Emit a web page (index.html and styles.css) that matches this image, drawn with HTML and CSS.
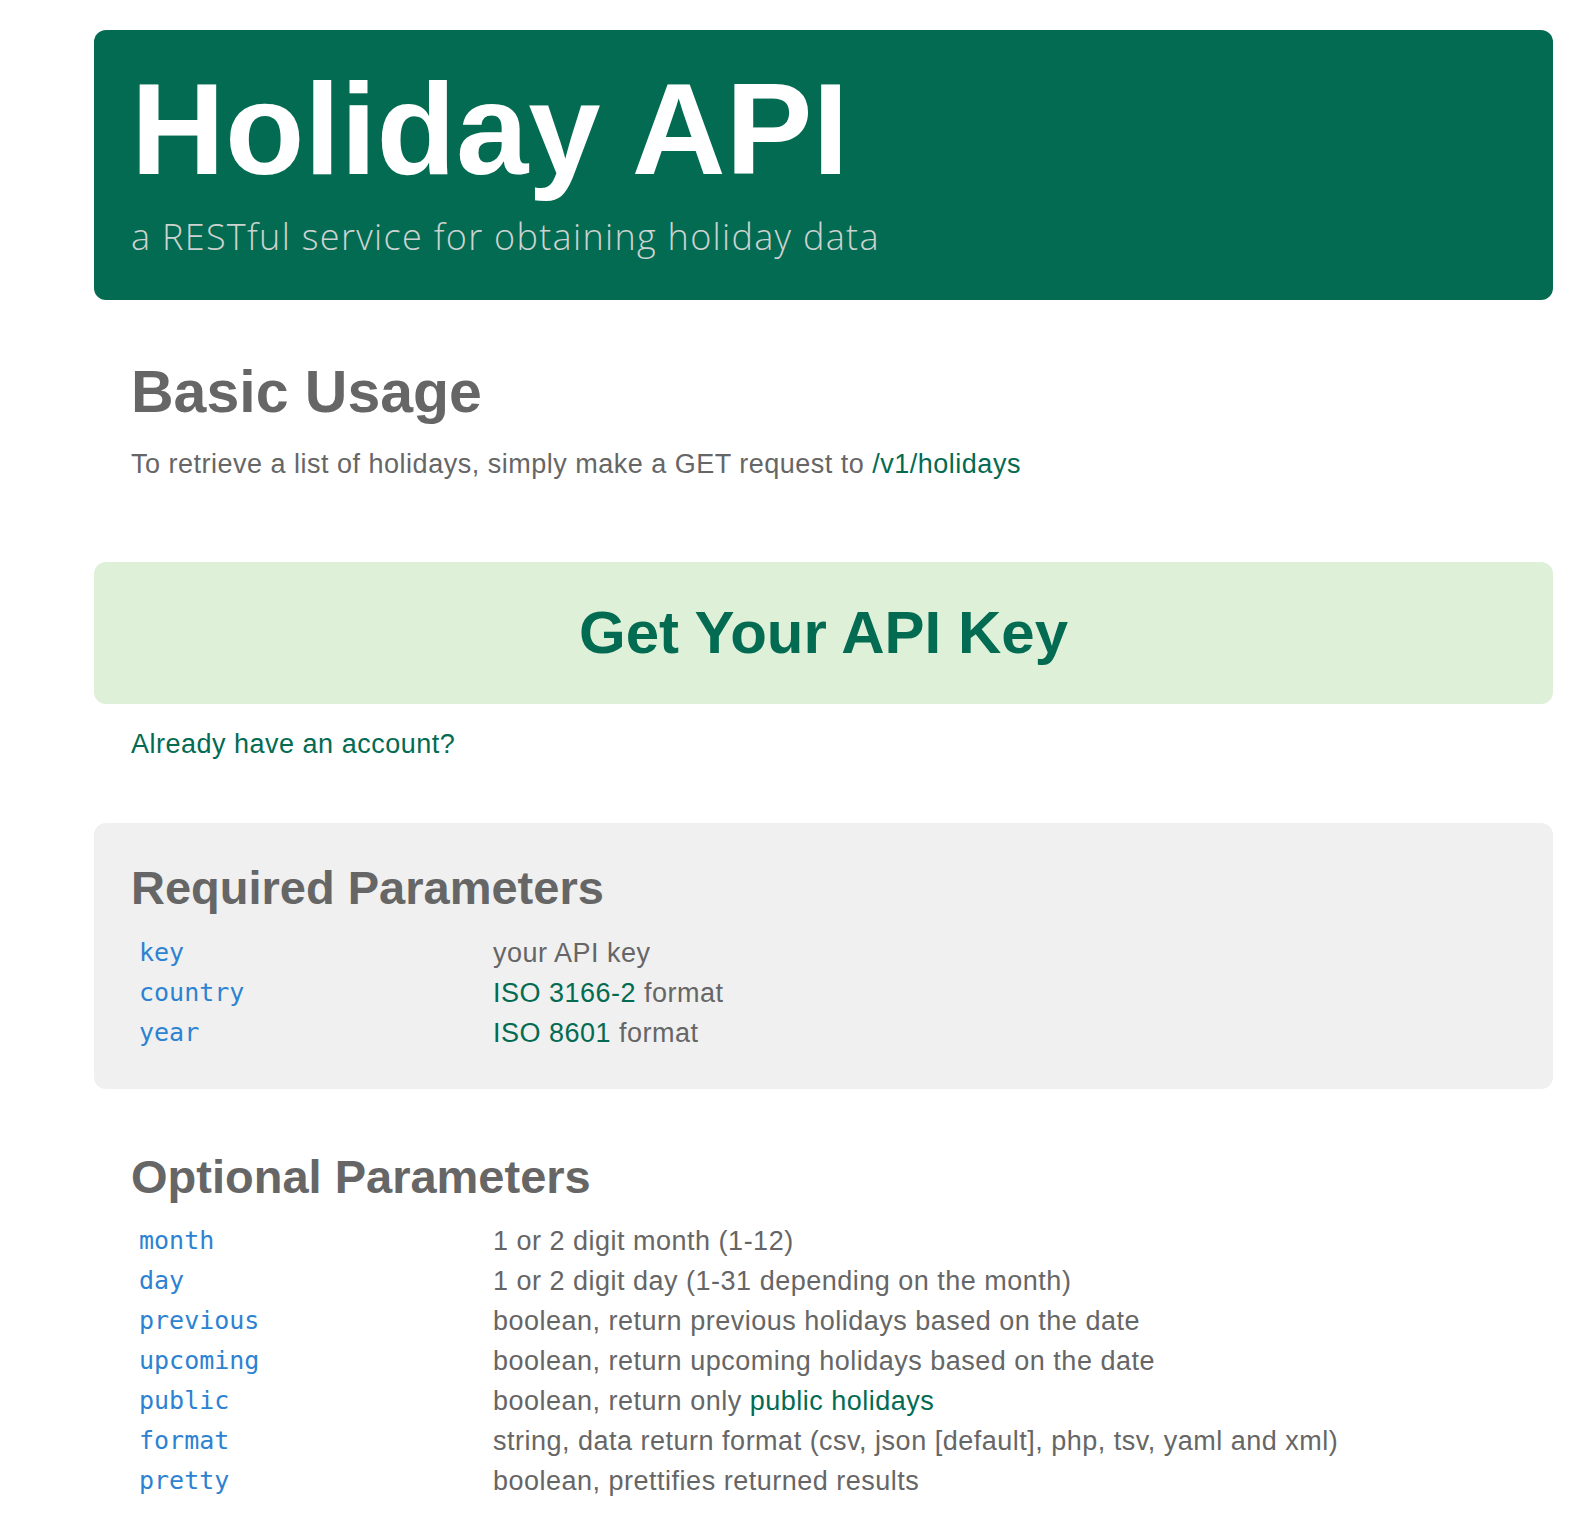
FILE: index.html
```html
<!DOCTYPE html>
<html lang="en">
<head>
    <meta charset="UTF-8">
    <meta name="viewport" content="width=device-width, initial-scale=1.0">
    <title>Holiday API</title>
    <link rel="stylesheet" href="styles.css">
</head>
<body>

<div class="container">

    <!-- Header -->
    <header class="hero">
        <h1>Holiday API</h1>
        <p class="tagline">a RESTful service for obtaining holiday data</p>
    </header>

    <!-- Basic Usage -->
    <section class="usage">
        <h2>Basic Usage</h2>
        <p>To retrieve a list of holidays, simply make a GET request to <a href="#">/v1/holidays</a></p>
    </section>

    <!-- Sign up -->
    <a class="cta" href="#">Get Your API Key</a>
    <p class="login"><a href="#">Already have an account?</a></p>

    <!-- Required Parameters -->
    <section class="params params-required">
        <h3>Required Parameters</h3>
        <div class="param-list">
            <code>key</code><span>your API key</span>
            <code>country</code><span><a href="#">ISO 3166-2</a> format</span>
            <code>year</code><span><a href="#">ISO 8601</a> format</span>
        </div>
    </section>

    <!-- Optional Parameters -->
    <section class="params params-optional">
        <h3>Optional Parameters</h3>
        <div class="param-list">
            <code>month</code><span>1 or 2 digit month (1-12)</span>
            <code>day</code><span>1 or 2 digit day (1-31 depending on the month)</span>
            <code>previous</code><span>boolean, return previous holidays based on the date</span>
            <code>upcoming</code><span>boolean, return upcoming holidays based on the date</span>
            <code>public</code><span>boolean, return only <a href="#">public holidays</a></span>
            <code>format</code><span>string, data return format (csv, json [default], php, tsv, yaml and xml)</span>
            <code>pretty</code><span>boolean, prettifies returned results</span>
        </div>
    </section>

</div>

</body>
</html>
```

FILE: styles.css
```css
body {
    margin: 0;
    font-family: "Liberation Sans", Arial, sans-serif;
    font-size: 27px;
    letter-spacing: 0.5px;
    line-height: 40px;
    color: #666;
    background: #fff;
}

a {
    color: #036b52;
    text-decoration: none;
}

p {
    margin: 0;
}

.container {
    margin: 30px 39px 0 94px;
}

/* header */
.hero {
    background-color: #036b52;
    border-radius: 12px;
    padding: 28px 37px 42px;
}

.hero h1 {
    margin: 0;
    font-size: 130px;
    line-height: 143px;
    font-weight: bold;
    letter-spacing: 0;
    color: #fff;
}

.hero .tagline {
    margin-top: 15px;
    font-family: "Open Sans", "Liberation Sans", sans-serif;
    font-weight: 300;
    font-size: 36px;
    letter-spacing: 1.3px;
    line-height: 42px;
    color: #cdd3d0;
}

/* basic usage */
.usage {
    padding: 60px 37px 0;
}

.usage h2 {
    margin: 0 0 20px;
    font-size: 59px;
    line-height: 64px;
    letter-spacing: 0;
    color: #666;
}

/* api key button */
.cta {
    display: block;
    margin-top: 78px;
    padding: 39px 0;
    background-color: #dff0d8;
    border-radius: 12px;
    text-align: center;
    font-size: 60px;
    line-height: 64px;
    letter-spacing: 0;
    font-weight: bold;
}

.login {
    padding: 20px 37px 0;
}

/* parameters */
.params {
    padding: 0 37px;
}

.params h3 {
    margin: 0;
    font-size: 47px;
    line-height: 52px;
    letter-spacing: 0;
    color: #666;
}

.params-required {
    margin-top: 59px;
    padding-top: 39px;
    padding-bottom: 36px;
    background-color: #f0f0f0;
    border-radius: 12px;
}

.params-optional {
    margin-top: 62px;
}

.param-list {
    display: grid;
    grid-template-columns: 362px 1fr;
    grid-auto-rows: 40px;
    margin-top: 19px;
}

.params-optional .param-list {
    margin-top: 18px;
}

.param-list code {
    padding-left: 8px;
    font-family: "DejaVu Sans Mono", monospace;
    font-size: 25px;
    letter-spacing: 0;
    color: #2d82d2;
}
```
